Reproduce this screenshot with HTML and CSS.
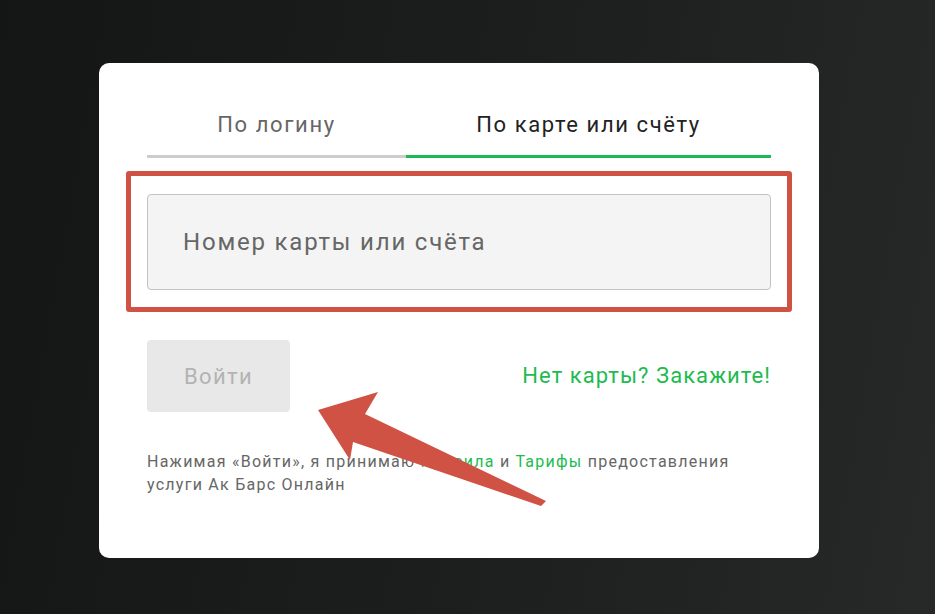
FILE: index.html
```html
<!DOCTYPE html>
<html lang="ru">
<head>
<meta charset="utf-8">
<link rel="stylesheet" href="styles.css">
</head>
<body>
<div class="page">
  <div class="card">
    <div class="tabs">
      <div class="tab">По логину</div>
      <div class="tab active">По карте или счёту</div>
    </div>
    <div class="field-wrap">
      <div class="field">Номер карты или счёта</div>
    </div>
    <div class="actions">
      <div class="btn">Войти</div>
      <a class="order">Нет карты? Закажите!</a>
    </div>
    <p class="terms">Нажимая «Войти», я принимаю <a class="lnk">Правила</a> и <a class="lnk">Тарифы</a> предоставления услуги Ак Барс Онлайн</p>
  </div>
  <svg class="arrow" width="935" height="614" viewBox="0 0 935 614">
    <polygon points="318,410 378,392 365,414 546,501 541,506 353,442 350,460" fill="#d05244"/>
  </svg>
</div>
</body>
</html>
```
FILE: styles.css
```css
* { box-sizing: border-box; }
html, body { margin: 0; padding: 0; }
body {
  width: 935px;
  height: 614px;
  overflow: hidden;
  font-family: Roboto, "Liberation Sans", sans-serif;
}
.page {
  position: relative;
  width: 935px;
  height: 614px;
  background: linear-gradient(100deg, #141615 0%, #1d1f1e 55%, #262928 100%);
  padding: 63px 0 0 99px;
}
.card {
  width: 720px;
  height: 495px;
  background: #fff;
  border-radius: 10px;
  padding: 0 48px;
}
.tabs {
  display: flex;
  padding-top: 44px;
}
.tab {
  text-align: center;
  font-size: 22px;
  letter-spacing: 1.6px;
  color: #666;
  line-height: 36px;
  padding-bottom: 12px;
  border-bottom: 3px solid #cccccc;
  flex: 0 0 259px;
}
.tab.active {
  flex: 1;
  color: #222;
  border-bottom-color: #1db954;
}
.field-wrap {
  margin: 13px -21px 0;
  border: 5px solid #d05244;
  border-radius: 3px;
  padding: 18px 16px 17px;
}
.field {
  height: 96px;
  background: #f4f4f4;
  border: 1px solid #c2c2c2;
  border-radius: 4px;
  padding-left: 35px;
  font-size: 24px;
  letter-spacing: 1.8px;
  color: #666;
  display: flex;
  align-items: center;
}
.actions {
  margin-top: 28px;
  display: flex;
  justify-content: space-between;
  align-items: center;
}
.btn {
  width: 143px;
  height: 72px;
  background: #e8e8e8;
  border-radius: 4px;
  color: #b3b3b3;
  font-size: 22px;
  letter-spacing: 1.4px;
  display: flex;
  align-items: center;
  justify-content: center;
}
.order {
  color: #1dbb50;
  font-size: 22px;
  letter-spacing: 1.05px;
  margin-bottom: 2px;
}
.terms {
  margin: 38px 0 0;
  font-size: 16px;
  letter-spacing: 1.25px;
  line-height: 23px;
  color: #666;
  width: 600px;
}
.lnk { color: #1dbb50; }
.arrow {
  position: absolute;
  left: 0;
  top: 0;
}
```
